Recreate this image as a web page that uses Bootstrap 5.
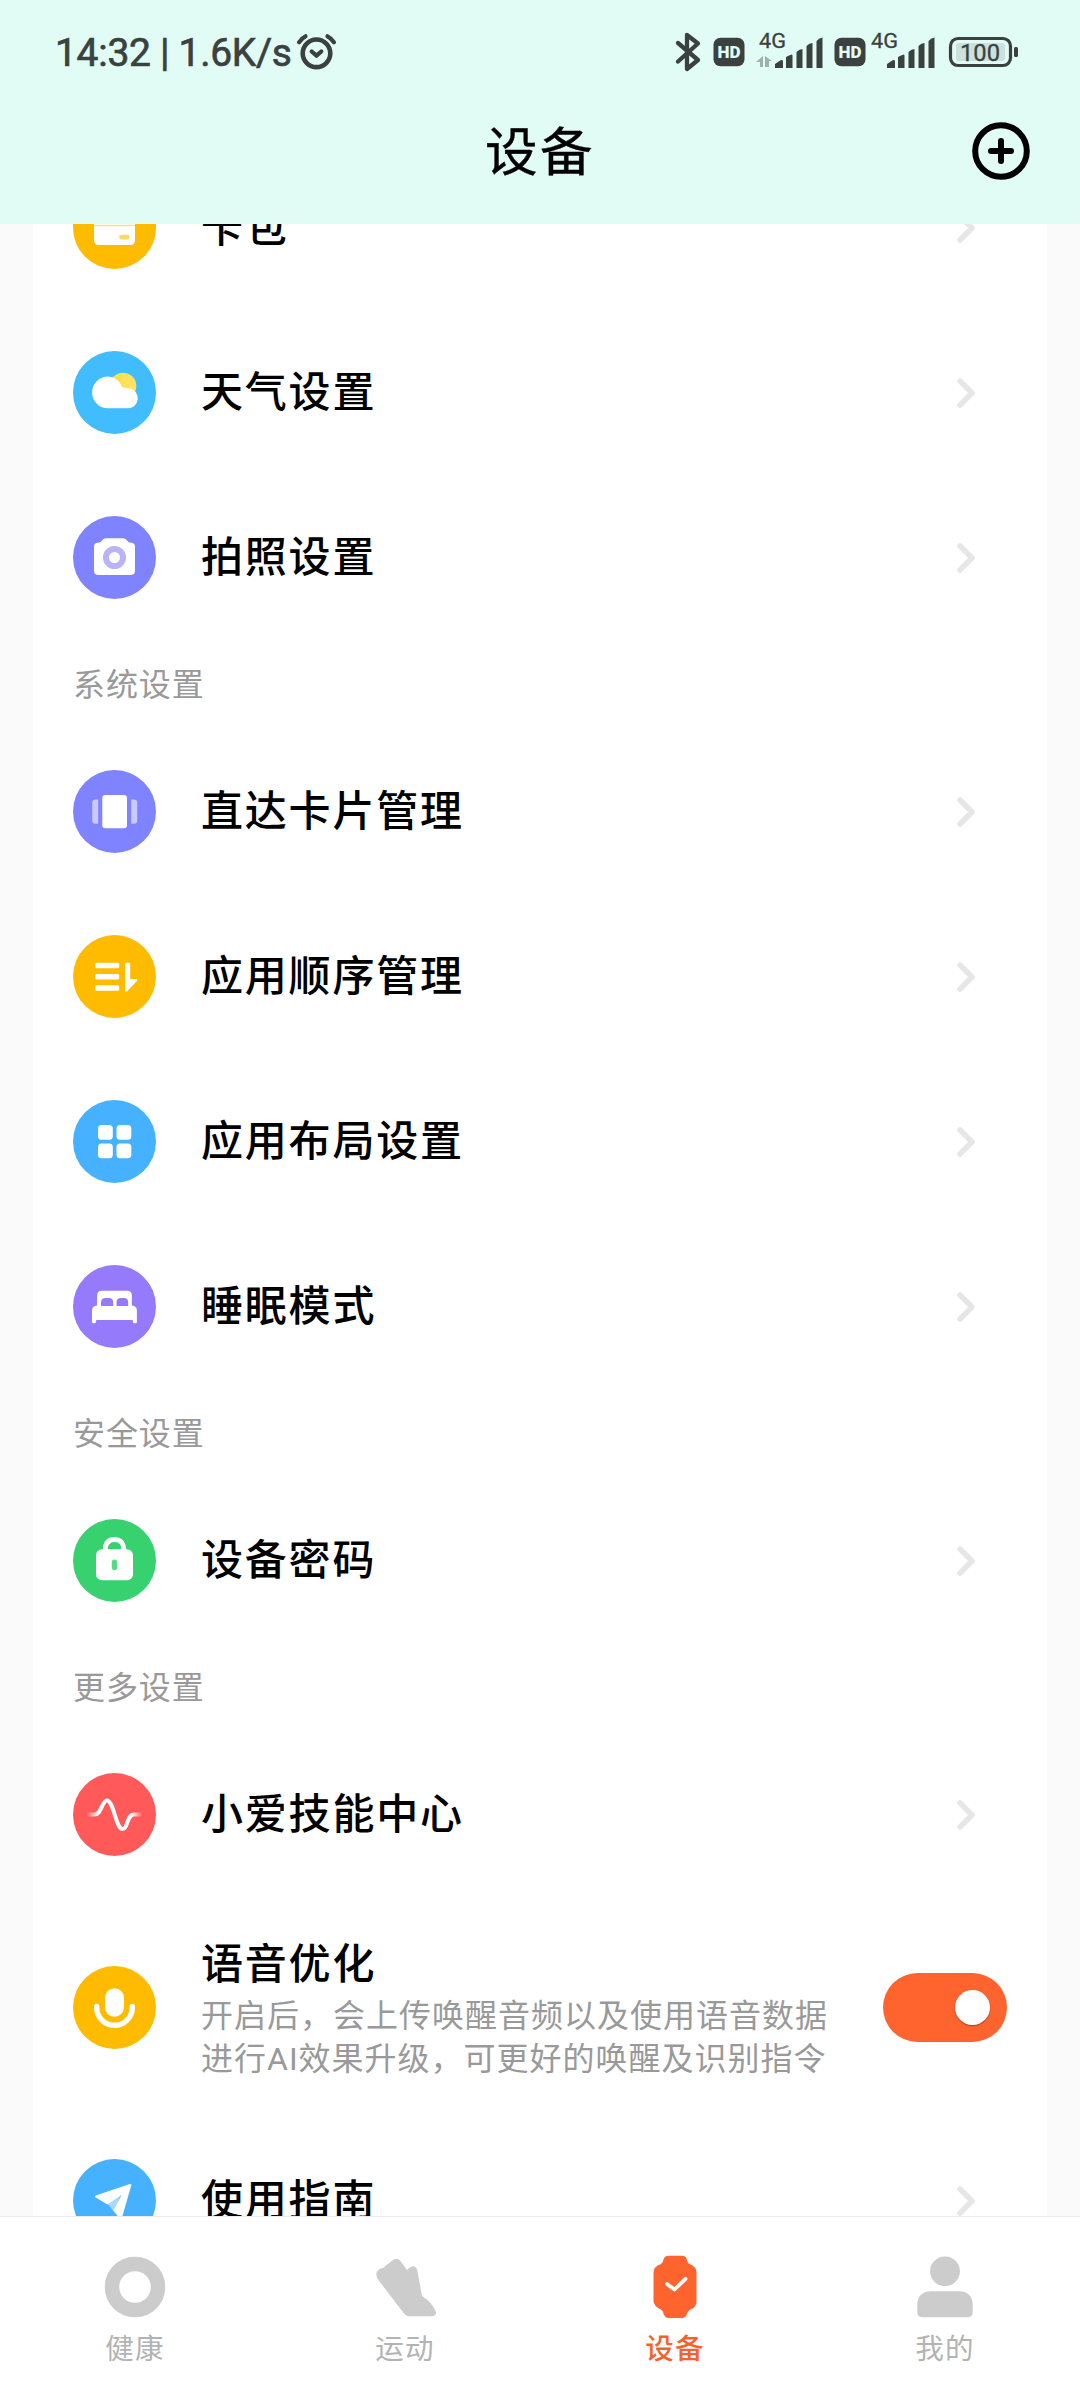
<!DOCTYPE html>
<html lang="zh-CN">
<head>
<meta charset="utf-8">
<meta name="viewport" content="width=device-width, initial-scale=1">
<title>设备</title>
<link href="https://cdn.jsdelivr.net/npm/bootstrap@5.3.0/dist/css/bootstrap.min.css" rel="stylesheet">
<style>
  body { font-family: Roboto, "Noto Sans CJK SC", sans-serif; color: #000; background: #fafafa; }
  .phone { width: 1080px; height: 2400px; }
  .top-area { height: 224px; background: #e1fcf5; }
  .status { height: 106px; padding: 0 61px 0 55px; color: #3a413e; }
  .status-time { width: 241px; font-size: 39px; font-weight: 400; -webkit-text-stroke: .7px #3a413e; letter-spacing: -.3px; line-height: 1; }
  .title-bar { height: 90px; padding: 0 50px; }
  .page-title { font-size: 52.5px; letter-spacing: 2.5px; line-height: 1; padding-top: 4px; -webkit-text-stroke: .4px #000; }
  .sheet { width: 1014px; margin-top: -79px; padding: 0 40px; }
  .entry { height: 165px; gap: 45px; padding-right: 31px; }
  .entry.tall { height: 221px; padding-right: 0; }
  .entry-name { font-size: 42px; letter-spacing: 1.8px; font-weight: 500; line-height: 54px; padding-top: 1px; }
  .entry-note { font-size: 32px; letter-spacing: 1px; line-height: 43px; color: #999; padding-top: 3px; margin-bottom: -3px; }
  .group-name { height: 89px; font-size: 32px; letter-spacing: .9px; color: #999; }
  .switch { width: 124px; height: 69px; padding: 17px; background: #ff642f; }
  .knob { width: 35px; height: 35px; box-shadow: 0 1px 2px rgba(0,0,0,.35); }
  .tabs { height: 184px; border-top: 1px solid #eee; padding-top: 35px; }
  .tab-name { font-size: 28.5px; letter-spacing: 1.2px; line-height: 40px; color: #b3b3b3; margin-top: 8px; }
  .tab-name.on { color: #f4632f; font-weight: 500; }
  svg { display: block; flex: none; }
</style>
</head>
<body>
<div class="phone d-flex flex-column overflow-hidden">
  <header class="top-area flex-shrink-0">
    <div class="status d-flex align-items-center justify-content-between">
      <div class="d-flex align-items-center">
        <span class="status-time text-nowrap flex-shrink-0">14:32 | 1.6K/s</span>
        <svg width="42" height="40" viewBox="296 33 42 40" fill="none" stroke="#3a413e" stroke-width="4.6" stroke-linecap="round" stroke-linejoin="round">
          <circle cx="316.5" cy="53.3" r="13.8"/><path d="M311.7 51.5l4.8 4.2 4.8-4.2M299 42.3q2.5-4 6.5-6M334 42.3q-2.500-4-6.500-6" stroke-width="4.2"/>
        </svg>
      </div>
      <svg width="345" height="44" viewBox="674 31 345 44" fill="#3a413e" font-family="Roboto, sans-serif">
        <path d="M678 43l20 17-11 9V35l11 8.500-20 18" fill="none" stroke="#3a413e" stroke-width="4.3" stroke-linecap="round" stroke-linejoin="round"/>
        <rect x="713.5" y="37.700" width="31" height="28.600" rx="7"/>
        <text x="729" y="57.700" font-size="16" font-weight="900" fill="#e1fcf5" text-anchor="middle" textLength="23" lengthAdjust="spacingAndGlyphs">HD</text>
        <text x="759" y="48" font-size="21" font-weight="400" stroke="#3a413e" stroke-width=".3" textLength="27" lengthAdjust="spacingAndGlyphs">4G</text>
        <path d="M756 62l7-6v11h-3v-5zM772 61h-3v6h-4V56z" opacity=".4"/>
        <path id="bars" d="M775 68v-4l6-4q2 0 2 1v7zM786 68V57q3-2 6-2.500l.5 1V68zM796.500 68V52q3-3 6-3V68zM806.500 68V46q3-3 6-3V68zM816.500 68V41q3-3.500 6-3.500V68z"/>
        <rect x="834.5" y="37.700" width="31" height="28.600" rx="7"/>
        <text x="850" y="57.700" font-size="16" font-weight="900" fill="#e1fcf5" text-anchor="middle" textLength="23" lengthAdjust="spacingAndGlyphs">HD</text>
        <text x="871" y="48" font-size="21" font-weight="400" stroke="#3a413e" stroke-width=".3" textLength="27" lengthAdjust="spacingAndGlyphs">4G</text>
        <use href="#bars" x="112"/>
        <rect x="950.500" y="38.500" width="60" height="27" rx="7.500" fill="none" stroke="#3a413e" stroke-width="3.200"/>
        <rect x="956" y="43" width="49" height="18" rx="3" fill="#cbe2dc"/>
        <text x="980" y="61" font-size="24" font-weight="400" text-anchor="middle" textLength="40" lengthAdjust="spacingAndGlyphs" stroke="#3a413e" stroke-width=".3">100</text>
        <rect x="1014" y="47" width="4" height="10" rx="1.500"/>
      </svg>
    </div>
    <div class="title-bar d-flex align-items-center justify-content-between">
      <span style="width:58px"></span>
      <h1 class="page-title m-0 fw-normal">设备</h1>
      <svg width="58" height="58" viewBox="-29 -29 58 58" fill="none" stroke="#000" stroke-width="6" stroke-linecap="round"><circle r="25.800"/><path d="M-10 0h20M0-10v20"/></svg>
    </div>
  </header>

  <main class="flex-grow-1 overflow-hidden">
    <div class="sheet bg-white mx-auto">
      <div class="entry d-flex align-items-center">
        <svg width="83" height="83" viewBox="-41.5 -41.5 83 83"><circle r="41.5" fill="#ffbb00"/><rect x="-20.500" y="-15" width="41" height="32.500" rx="4.500" fill="#fff"/><path d="M-20.500-2h41" stroke="#ffdf80" stroke-width="1.400"/><rect x="4.700" y="7.300" width="10.300" height="4.700" rx="2.300" fill="#ffd668"/></svg>
        <span class="entry-name flex-grow-1">卡包</span>
        <svg width="20" height="32" viewBox="-10 -16 20 32"><path d="M-6-12L6 0-6 12" fill="none" stroke="#e6e6e6" stroke-width="5.500" stroke-linecap="round" stroke-linejoin="round"/></svg>
      </div>
      <div class="entry d-flex align-items-center">
        <svg width="83" height="83" viewBox="-41.5 -41.5 83 83"><defs><linearGradient id="sun" x1="0" y1="0" x2="1" y2="0"><stop stop-color="#ffdc3f"/><stop offset="1" stop-color="#ffe46a"/></linearGradient></defs><circle r="41.5" fill="#40bcff"/><circle cx="8.500" cy="-6.500" r="13.300" fill="url(#sun)"/><path d="M-6.500-16A15.800 15.800 0 0 0-6.500 15.800H12.500A9.800 9.800 0 0 0 14-4.200Q10-4.800 7.500-5.500A15.500 15.500 0 0 0-6.500-16z" fill="#fff"/></svg>
        <span class="entry-name flex-grow-1">天气设置</span>
        <svg width="20" height="32" viewBox="-10 -16 20 32"><path d="M-6-12L6 0-6 12" fill="none" stroke="#e6e6e6" stroke-width="5.500" stroke-linecap="round" stroke-linejoin="round"/></svg>
      </div>
      <div class="entry d-flex align-items-center">
        <svg width="83" height="83" viewBox="-41.5 -41.5 83 83"><circle r="41.5" fill="#8083ff"/><path d="M-16.500-14.700q2.500 0 4-2.300 1.500-2.300 4-2.300H8.500q2.500 0 4 2.300 1.500 2.300 4 2.300 4 0 4 4V13q0 4.600-4.600 4.600h-31.800q-4.600 0-4.600-4.600V-10.700q0-4 4-4z" fill="#fff"/><circle r="8.500" fill="none" stroke="#b9b3f8" stroke-width="6"/></svg>
        <span class="entry-name flex-grow-1">拍照设置</span>
        <svg width="20" height="32" viewBox="-10 -16 20 32"><path d="M-6-12L6 0-6 12" fill="none" stroke="#e6e6e6" stroke-width="5.500" stroke-linecap="round" stroke-linejoin="round"/></svg>
      </div>

      <div class="group-name d-flex align-items-center">系统设置</div>
      <div class="entry d-flex align-items-center">
        <svg width="83" height="83" viewBox="-41.5 -41.5 83 83"><circle r="41.5" fill="#8083ff"/><rect x="-12.200" y="-16.600" width="24.700" height="33.300" rx="3" fill="#fff"/><path d="M-16.300-12h-2.700q-3.300 0-3.300 3.300V9q0 3.300 3.300 3.300h2.700zM16.700-12h2.700q3.300 0 3.300 3.300V9q0 3.300-3.300 3.300h-2.700z" fill="#c9c9ff"/></svg>
        <span class="entry-name flex-grow-1">直达卡片管理</span>
        <svg width="20" height="32" viewBox="-10 -16 20 32"><path d="M-6-12L6 0-6 12" fill="none" stroke="#e6e6e6" stroke-width="5.500" stroke-linecap="round" stroke-linejoin="round"/></svg>
      </div>
      <div class="entry d-flex align-items-center">
        <svg width="83" height="83" viewBox="-41.5 -41.5 83 83" fill="#fff"><circle r="41.5" fill="#ffbb00"/><rect x="-19.300" y="-13.800" width="24" height="5.500" rx="1.500"/><rect x="-19.300" y="-2.600" width="24" height="5.500" rx="1.500"/><rect x="-19.300" y="8.700" width="24" height="5.500" rx="1.500"/><path d="M10.700-12.500q0-1.300 1.300-1.300h2.400q1.300 0 1.300 1.300V2.500H21.500q2.300.3.700 2.200L12.700 14.700q-2 1.500-2-.8z"/></svg>
        <span class="entry-name flex-grow-1">应用顺序管理</span>
        <svg width="20" height="32" viewBox="-10 -16 20 32"><path d="M-6-12L6 0-6 12" fill="none" stroke="#e6e6e6" stroke-width="5.500" stroke-linecap="round" stroke-linejoin="round"/></svg>
      </div>
      <div class="entry d-flex align-items-center">
        <svg width="83" height="83" viewBox="-41.5 -41.5 83 83" fill="#fff"><circle r="41.5" fill="#46b2ff"/><rect x="-16.500" y="-16.500" width="14.800" height="14.800" rx="3.500"/><rect x="2" y="-16.500" width="14.800" height="14.800" rx="3.500"/><rect x="-16.500" y="2" width="14.800" height="14.800" rx="3.500"/><rect x="2" y="2" width="14.800" height="14.800" rx="3.500"/></svg>
        <span class="entry-name flex-grow-1">应用布局设置</span>
        <svg width="20" height="32" viewBox="-10 -16 20 32"><path d="M-6-12L6 0-6 12" fill="none" stroke="#e6e6e6" stroke-width="5.500" stroke-linecap="round" stroke-linejoin="round"/></svg>
      </div>
      <div class="entry d-flex align-items-center">
        <svg width="83" height="83" viewBox="-41.5 -41.5 83 83"><circle r="41.5" fill="#957bfc"/><path d="M-17.400-1V-11q0-4.700 4.700-4.700h25.400q4.700 0 4.700 4.700V-1q5 .3 5 5V15.500q0 1.200-1.200 1.200h-1.500q-1.500 0-1.500-3.200h-36.500q0 3.200-1.500 3.200h-1.500q-1.200 0-1.200-1.200V4q0-4.700 5.100-5z" fill="#fff"/><path d="M-13.500-.5v-3.500q0-4.500 4.500-4.500h3.500q4.200 0 4.200 4.500v3.500zM2-.5v-3.500q0-4.500 4.500-4.500h3q4.200 0 4.200 4.500v3.500z" fill="#957bfc"/></svg>
        <span class="entry-name flex-grow-1">睡眠模式</span>
        <svg width="20" height="32" viewBox="-10 -16 20 32"><path d="M-6-12L6 0-6 12" fill="none" stroke="#e6e6e6" stroke-width="5.500" stroke-linecap="round" stroke-linejoin="round"/></svg>
      </div>

      <div class="group-name d-flex align-items-center">安全设置</div>
      <div class="entry d-flex align-items-center">
        <svg width="83" height="83" viewBox="-41.5 -41.5 83 83"><circle r="41.5" fill="#37d16f"/><path d="M-9.300-10q0-11 9.300-11t9.300 11" fill="none" stroke="#fff" stroke-width="4.800"/><rect x="-18.500" y="-11.300" width="37" height="31" rx="6" fill="#fff"/><rect x="-2.700" y="-1" width="5.400" height="10.700" rx="2.700" fill="#58d888"/></svg>
        <span class="entry-name flex-grow-1">设备密码</span>
        <svg width="20" height="32" viewBox="-10 -16 20 32"><path d="M-6-12L6 0-6 12" fill="none" stroke="#e6e6e6" stroke-width="5.500" stroke-linecap="round" stroke-linejoin="round"/></svg>
      </div>

      <div class="group-name d-flex align-items-center">更多设置</div>
      <div class="entry d-flex align-items-center">
        <svg width="83" height="83" viewBox="-41.5 -41.5 83 83"><defs><linearGradient id="fade" gradientUnits="userSpaceOnUse" x1="-28" y1="0" x2="28" y2="0"><stop stop-color="#fff" stop-opacity="0"/><stop offset=".2" stop-color="#fff"/><stop offset=".8" stop-color="#fff"/><stop offset="1" stop-color="#fff" stop-opacity="0"/></linearGradient></defs><circle r="41.5" fill="#ff5959"/><path d="M-28 0H-20C-13 0-12.500-14-7.500-14C-1 -14 1.500 14.500 8 14.500C13.500 14.500 12 0 19.500 0H28" fill="none" stroke="url(#fade)" stroke-width="4"/></svg>
        <span class="entry-name flex-grow-1">小爱技能中心</span>
        <svg width="20" height="32" viewBox="-10 -16 20 32"><path d="M-6-12L6 0-6 12" fill="none" stroke="#e6e6e6" stroke-width="5.500" stroke-linecap="round" stroke-linejoin="round"/></svg>
      </div>
      <div class="entry tall d-flex align-items-center">
        <svg width="83" height="83" viewBox="-41.5 -41.5 83 83"><circle r="41.5" fill="#ffbb00"/><rect x="-9.500" y="-19.300" width="19" height="28.600" rx="9.500" fill="#fff"/><path d="M-17.800-1V0a17.800 17.800 0 0 0 35.600 0V-1" fill="none" stroke="#fff" stroke-width="5.400" stroke-linecap="round"/></svg>
        <div class="flex-grow-1">
          <div class="entry-name">语音优化</div>
          <div class="entry-note text-nowrap">开启后，会上传唤醒音频以及使用语音数据<br>进行AI效果升级，可更好的唤醒及识别指令</div>
        </div>
        <div class="switch rounded-pill d-flex justify-content-end flex-shrink-0" role="switch" aria-checked="true"><span class="knob rounded-circle bg-white"></span></div>
      </div>
      <div class="entry d-flex align-items-center">
        <svg width="83" height="83" viewBox="-41.5 -41.5 83 83"><circle r="41.5" fill="#46b2ff"/><path d="M-7 3L6-6 0 12z" fill="#a5d9ff"/><path d="M15.500-16.500q1.700 0 1.200 1.700L7.500 17q-1.300 2.500-3 .5L-1 10 7-5.500-7 4-18.500-2.700q-2-1.500.3-2.500z" fill="#fff"/></svg>
        <span class="entry-name flex-grow-1">使用指南</span>
        <svg width="20" height="32" viewBox="-10 -16 20 32"><path d="M-6-12L6 0-6 12" fill="none" stroke="#e6e6e6" stroke-width="5.500" stroke-linecap="round" stroke-linejoin="round"/></svg>
      </div>
    </div>
  </main>

  <nav class="tabs bg-white d-flex flex-shrink-0 text-center">
    <div class="col-3 d-flex flex-column align-items-center">
      <svg width="70" height="70" viewBox="-35 -35 70 70"><circle r="23" fill="none" stroke="#ccc" stroke-width="14.500"/></svg>
      <div class="tab-name">健康</div>
    </div>
    <div class="col-3 d-flex flex-column align-items-center">
      <svg width="70" height="70" viewBox="370 2252 70 70"><path d="M392.500 2260.500Q397 2257 400.500 2261L407 2270Q414 2263 417 2269L422 2296Q432 2302 436 2312Q436.500 2316 432 2316.300H409Q406 2316 404 2313.500L378 2279.500Q374 2273 379.500 2269Q384 2268 386.500 2265z" fill="#ccc"/></svg>
      <div class="tab-name">运动</div>
    </div>
    <div class="col-3 d-flex flex-column align-items-center">
      <svg width="70" height="70" viewBox="640.5 2252 70 70"><path d="M669 2255.700H682.500Q686.500 2255.700 687.500 2260Q688.300 2263.500 690 2264Q697 2266.500 697 2273V2302Q697 2307 690 2310Q688.300 2311 687.500 2314Q686 2318 682.500 2318H669Q665.500 2318 664 2313.500Q663.500 2310.500 661.500 2309.500Q654 2306 654 2301V2273Q654 2266.500 661.500 2264Q663.200 2263 664 2259.500Q665 2255.700 669 2255.700z" fill="#ff642f"/><path d="M667.500 2284l7.500 5.500 11-10.700" fill="none" stroke="#fff" stroke-width="3.800" stroke-linecap="round" stroke-linejoin="round"/></svg>
      <div class="tab-name on">设备</div>
    </div>
    <div class="col-3 d-flex flex-column align-items-center">
      <svg width="70" height="70" viewBox="910 2252 70 70" fill="#ccc"><circle cx="945" cy="2271.300" r="14.900"/><path d="M931 2291.300H959Q972.700 2292 972.700 2305V2312Q972.700 2317.200 968 2317.200H922Q917.300 2317.200 917.300 2312V2305Q917.300 2292 931 2291.300z"/></svg>
      <div class="tab-name">我的</div>
    </div>
  </nav>
</div>
<script src="https://cdn.jsdelivr.net/npm/bootstrap@5.3.0/dist/js/bootstrap.bundle.min.js"></script>
</body>
</html>
